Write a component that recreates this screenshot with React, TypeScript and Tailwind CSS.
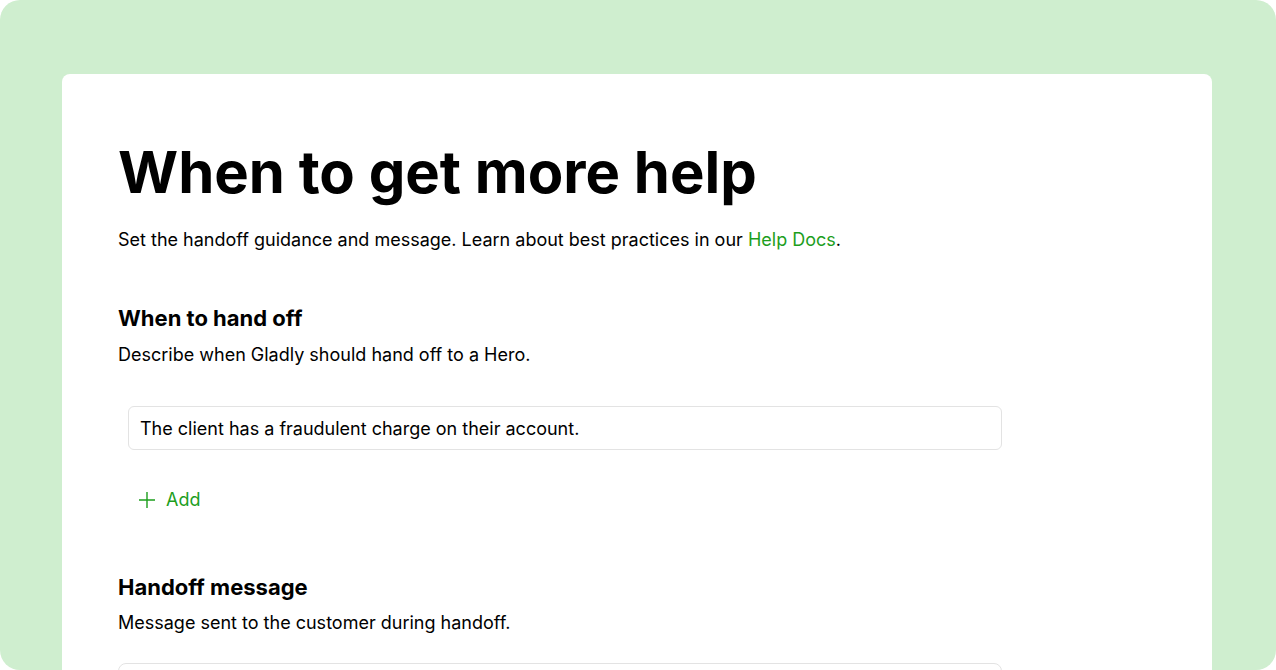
import React from "react";

export default function App() {
  return (
    <div className="w-[1276px] h-[670px] bg-white overflow-hidden" style={{ fontFamily: "Inter, 'Noto Sans', sans-serif" }}>
      <div className="h-[670px] rounded-[20px] bg-[#cfeecf] pt-[74px] pl-[62px] pr-[64px] overflow-hidden">
        <div className="bg-white rounded-t-[8px] h-[700px] pl-[56px] pt-[62px] text-black">
          <h1 className="text-[58px] leading-[72px] font-bold">When to get more help</h1>
          <p className="mt-[20px] text-[18px] leading-[24px]">
            Set the handoff guidance and message. Learn about best practices in our{" "}
            <span className="text-[#1d9e1d]">Help Docs</span>.
          </p>
          <h2 className="mt-[52px] text-[22px] leading-[28px] font-bold">When to hand off</h2>
          <p className="mt-[11px] text-[18px] leading-[24px]">Describe when Gladly should hand off to a Hero.</p>
          <div className="mt-[39px] ml-[10px] w-[874px] h-[44px] border border-[#e3e3e3] rounded-[6px] flex items-center px-[11px] text-[18px]">
            The client has a fraudulent charge on their account.
          </div>
          <div className="mt-[38px] ml-[20px] flex items-center gap-[10px] text-[#1d9e1d] text-[18px] leading-[24px]">
            <svg width="18" height="18" viewBox="0 0 18 18" fill="none" stroke="currentColor" strokeWidth="1.4">
              <path d="M9 1v16M1 9h16" />
            </svg>
            <span>Add</span>
          </div>
          <h2 className="mt-[61px] text-[22px] leading-[28px] font-bold">Handoff message</h2>
          <p className="mt-[10px] text-[18px] leading-[24px]">Message sent to the customer during handoff.</p>
          <div className="mt-[28px] w-[884px] h-[80px] border border-[#e3e3e3] rounded-[8px]"></div>
        </div>
      </div>
    </div>
  );
}
